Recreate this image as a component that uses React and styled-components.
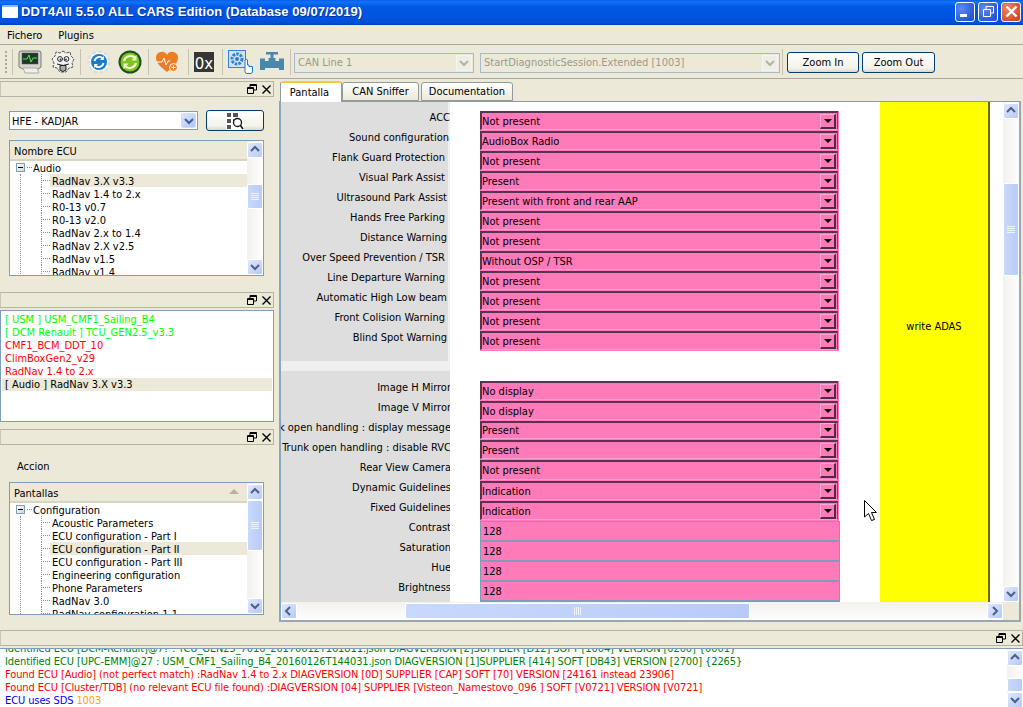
import React from 'react';
import styled, { createGlobalStyle } from 'styled-components';

const Global = createGlobalStyle`
    html, body {
        margin: 0;
        padding: 0;
        background: #ece9d8;
    }
    * {
        box-sizing: border-box;
    }
`;

const Window = styled.div`
    width: 1023px;
    height: 707px;
    overflow: hidden;
    display: flex;
    flex-direction: column;
    position: relative;
    background: #ece9d8;
    color: #000;
    font-family: "DejaVu Sans Condensed", "DejaVu Sans", sans-serif;
    font-size: 11px;
    line-height: 13px;
`;

const TitleBar = styled.div`
    height: 25px;
    flex: none;
    display: flex;
    align-items: center;
    padding: 0 2px 2px 2px;
    background: linear-gradient(180deg, #0a5ae8 0%, #0f74fb 8%, #0258e2 25%, #0053e0 75%, #0050d8 90%, #0041b5 100%);
`;
const AppIcon = styled.div`
    width: 16px;
    height: 13px;
    margin: 0 3px 0 0;
    background: #fff;
    border-top: 2px solid #9fb4d8;
    border-radius: 1px;
`;
const TitleText = styled.div`
    flex: 1;
    color: #fff;
    font-family: "Liberation Sans", sans-serif;
    font-weight: bold;
    font-size: 13px;
    letter-spacing: 0.06px;
    white-space: nowrap;
    text-shadow: 1px 1px #0f2f9a;
`;
const WinButton = styled.div`
    width: 20px;
    height: 20px;
    margin-left: 3px;
    display: flex;
    align-items: center;
    justify-content: center;
    border: 1px solid #fff;
    border-radius: 3px;
    background: ${p => (p.$red
        ? 'radial-gradient(circle at 30% 30%, #e8866a, #d5482b 80%)'
        : 'radial-gradient(circle at 30% 30%, #5c8cf0, #2453d6 80%)')};
`;

const MenuBar = styled.div`
    height: 20px;
    flex: none;
    display: flex;
    align-items: center;
    padding: 1px 0 0 7px;
    gap: 16px;
    border-bottom: 1px solid #aca899;
`;

const ToolBar = styled.div`
    height: 34px;
    flex: none;
    display: flex;
    align-items: center;
    border-bottom: 1px solid #aca899;
    padding-left: 5px;
`;
const Grip = styled.div`
    width: 2px;
    height: 22px;
    margin-right: 4px;
    background: repeating-linear-gradient(180deg, #aca899 0 2px, transparent 2px 4px);
`;
const Sep = styled.div`
    width: 1px;
    height: 26px;
    background: #c5c2b0;
    flex: none;
    margin: 0 ${p => p.$right || 5}px 0 ${p => p.$left || 5}px;
`;
const ToolIcon = styled.svg`
    flex: none;
    width: ${p => p.$w || 24}px;
    height: 24px;
    margin-right: ${p => p.$gap || 0}px;
`;
const ZeroBox = styled.div`
    width: 20px;
    height: 20px;
    flex: none;
    background: #353535;
    color: #fff;
    font-family: "DejaVu Sans", sans-serif;
    font-size: 15px;
    line-height: 15px;
    display: flex;
    align-items: flex-end;
    justify-content: center;
`;
const DisabledCombo = styled.div`
    flex: none;
    width: ${p => p.$w}px;
    height: 20px;
    margin: 2px ${p => p.$gap || 0}px 0 0;
    border: 1px solid #a9b9cc;
    color: #9a9a8c;
    padding: 2px 0 0 3px;
    display: flex;
    justify-content: space-between;
    white-space: nowrap;
`;
const DisabledArrow = styled.div`
    width: 16px;
    height: 16px;
    margin-top: -1px;
    margin-right: 1px;
    background: #eeeee4;
    border: 1px solid #f6f6f0;
    display: flex;
    align-items: center;
    justify-content: center;
`;
const PushButton = styled.div`
    flex: none;
    width: ${p => p.$w}px;
    height: 21px;
    margin: 2px ${p => p.$gap || 0}px 0 0;
    border: 1px solid #003c74;
    border-radius: 3px;
    background: linear-gradient(180deg, #fff 0%, #f3f2ea 80%, #dcd8c8 100%);
    display: flex;
    align-items: center;
    justify-content: center;
`;

const Main = styled.div`
    flex: 1;
    min-height: 0;
    display: flex;
`;
const LeftColumn = styled.div`
    width: 274px;
    flex: none;
    margin-right: 5px;
    padding-top: 2px;
    display: flex;
    flex-direction: column;
`;
const DockTitle = styled.div`
    height: 16px;
    flex: none;
    border: 1px solid #b5b29f;
    border-left-color: #c9c6b4;
    display: flex;
    align-items: center;
    justify-content: flex-end;
    gap: 5px;
    padding-right: 2px;
    background: #ece9d8;
`;
const DockBody = styled.div`
    height: ${p => p.$h}px;
    flex: none;
    padding: ${p => p.$pad || '0'};
`;

const ModelRow = styled.div`
    display: flex;
    align-items: center;
    gap: 8px;
    height: 21px;
    padding: 0 10px 0 9px;
    margin-bottom: 9px;
`;
const ModelCombo = styled.div`
    width: 189px;
    height: 19px;
    background: #fff;
    border: 1px solid #7f9db9;
    display: flex;
    justify-content: space-between;
    align-items: center;
    padding: 1px 1px 0 2px;
`;
const BlueArrow = styled.div`
    width: 15px;
    height: 15px;
    margin-top: -1px;
    border-radius: 2px;
    background: linear-gradient(135deg, #dbe5fd, #b0c5f5);
    border: 1px solid #d0dcf8;
    display: flex;
    align-items: center;
    justify-content: center;
`;
const SearchButton = styled(PushButton)`
    width: 58px;
    margin: 0;
`;

const TreeBox = styled.div`
    margin: 0 10px 0 9px;
    height: ${p => p.$h}px;
    border: 1px solid #7f9db9;
    background: #fff;
    display: flex;
    overflow: hidden;
`;
const TreeMain = styled.div`
    flex: 1;
    min-width: 0;
    display: flex;
    flex-direction: column;
`;
const TreeHeader = styled.div`
    height: 20px;
    flex: none;
    background: #ece9d8;
    border-bottom: 2px solid #d8d4c2;
    padding: 4px 0 0 4px;
    display: flex;
    justify-content: space-between;
`;
const SortMark = styled.div`
    width: 0;
    height: 0;
    margin: 2px 8px 0 0;
    border-left: 5px solid transparent;
    border-right: 5px solid transparent;
    border-bottom: 5px solid #b5b2a2;
`;
const TreeRows = styled.div`
    flex: 1;
    min-height: 0;
    overflow: hidden;
`;
const TreeRoot = styled.div`
    height: 13px;
    display: flex;
    align-items: center;
    padding-left: 6px;
`;
const RootLabel = styled.span`
    position: relative;
    top: 1px;
`;
const Expander = styled.div`
    width: 9px;
    height: 9px;
    flex: none;
    border: 1px solid #7f9db9;
    background: linear-gradient(135deg, #fff, #d8d4c6);
    display: flex;
    align-items: center;
    justify-content: center;
    margin-right: 2px;
    &::after {
        content: "";
        width: 5px;
        height: 1px;
        background: #000;
    }
`;
const RootDots = styled.div`
    width: 5px;
    border-top: 1px dotted #8f8d80;
    margin-right: 1px;
`;
const TreeChildren = styled.div`
    margin-left: 10px;
    border-left: 1px dotted #8f8d80;
`;
const TreeLeaf = styled.div`
    height: 13px;
    display: flex;
    align-items: center;
    padding-left: 20px;
    position: relative;
    white-space: nowrap;
    background: linear-gradient(90deg, #fff 0 29px, ${p => (p.$sel ? '#ece9d8' : '#fff')} 29px);
    &::before {
        content: "";
        width: 9px;
        margin-right: 2px;
        border-top: 1px dotted #8f8d80;
    }
`;
const LeafText = styled.span`
    position: relative;
    top: 1px;
`;
const LeafLine = styled.div`
    position: absolute;
    left: 20px;
    top: 0;
    bottom: 0;
    border-left: 1px dotted #8f8d80;
`;

const EcuList = styled.div`
    height: 112px;
    background: #fff;
    border: 1px solid #7f9db9;
    margin-top: 2px;
    padding: 2px 1px;
`;
const EcuRow = styled.div`
    height: 13px;
    padding-left: 3px;
    white-space: nowrap;
    color: ${p => p.$color || '#000'};
    background: ${p => (p.$sel ? '#ece9d8' : 'transparent')};
`;
const ActionLabel = styled.div`
    padding: 15px 0 0 17px;
    height: 37px;
`;

const TabArea = styled.div`
    flex: 1;
    min-width: 0;
    display: flex;
    flex-direction: column;
    padding: 1px 2px 0 0;
    height: 543px;
`;
const TabRow = styled.div`
    height: 21px;
    flex: none;
    display: flex;
    align-items: flex-end;
    padding-left: 1px;
`;
const Tab = styled.div`
    height: ${p => (p.$active ? 21 : 19)}px;
    width: ${p => p.$w}px;
    margin-right: ${p => p.$gap || 0}px;
    padding-right: ${p => (p.$active ? 3 : 0)}px;
    display: flex;
    align-items: center;
    justify-content: center;
    background: ${p => (p.$active ? '#fff' : 'linear-gradient(180deg, #fff, #ece9d8)')};
    border: 1px solid #919b9c;
    border-bottom: ${p => (p.$active ? 'none' : '1px solid #919b9c')};
    border-top: ${p => (p.$active ? '2px solid #ffc73c' : '1px solid #919b9c')};
    border-radius: 3px 3px 0 0;
    position: relative;
    margin-bottom: ${p => (p.$active ? '-1px' : '0')};
    z-index: ${p => (p.$active ? 1 : 0)};
`;
const TabPane = styled.div`
    flex: 1;
    min-height: 0;
    display: grid;
    grid-template-columns: 1fr 16px;
    grid-template-rows: 1fr 18px;
    border: 1px solid #919b9c;
    border-left: 2px solid #86a6c4;
    border-right: 2px solid #9aa6b0;
    border-bottom: 2px solid #9aa6b0;
    background: #fff;
`;
const Form = styled.div`
    overflow: hidden;
    display: flex;
    min-height: 0;
    min-width: 0;
`;
const LabelColumn = styled.div`
    width: 169px;
    flex: none;
    display: flex;
    flex-direction: column;
    background: #eeeeee;
`;
const LabelGroup = styled.div`
    height: ${p => p.$h}px;
    flex: none;
    background: ${p => (p.$solid ? '#dedede' : 'linear-gradient(90deg, #dedede 167px, #eeeeee 167px)')};
    padding-top: ${p => p.$top}px;
    margin-top: ${p => p.$gap || 0}px;
    overflow: hidden;
`;
const FieldLabel = styled.div`
    height: 20px;
    line-height: 13px;
    white-space: nowrap;
    display: flex;
    justify-content: flex-end;
    padding-right: ${p => p.$inset || 0}px;
    margin-right: ${p => -(p.$bleed || 0)}px;
`;
const FieldColumn = styled.div`
    width: 430px;
    flex: none;
    padding: 9px 0 0 30px;
    background: #fff;
    overflow: hidden;
`;
const FieldGap = styled.div`
    height: 30px;
`;
const Combo = styled.div`
    width: 359px;
    height: ${p => p.$h || 20}px;
    background: #ff7ab8;
    padding: 0 1px 1px 0;
    display: flex;
`;
const ComboInner = styled.div`
    flex: 1;
    display: flex;
    align-items: center;
    justify-content: space-between;
    border-top: 2px solid #5b3350;
    border-left: 2px solid #5b3350;
    border-right: 1px solid #8a3f69;
    border-bottom: 1px solid #ffa0d0;
    padding: 0 1px 0 0;
    white-space: nowrap;
`;
const ComboButton = styled.div`
    width: 16px;
    height: 15px;
    background: #ff7ab8;
    border-top: 1px solid #ffa8d2;
    border-left: 1px solid #ffa8d2;
    border-right: 2px solid #4e2c44;
    border-bottom: 2px solid #4e2c44;
    display: flex;
    align-items: center;
    justify-content: center;
    &::after {
        content: "";
        width: 0;
        height: 0;
        border-left: 4px solid transparent;
        border-right: 4px solid transparent;
        border-top: 4px solid #000;
    }
`;
const LineEdit = styled.div`
    width: 360px;
    height: 20px;
    background: #ff7ab8;
    border: 1px solid #7f9db9;
    padding: 3px 0 0 2px;
`;
const WriteColumn = styled.div`
    width: 110px;
    flex: none;
    background: #ffff00;
    border-right: 2px solid #6b6b00;
    display: flex;
    align-items: center;
    justify-content: center;
    padding-bottom: 52px;
`;
const FormRest = styled.div`
    flex: 1;
    background: #fff;
`;
const Pointer = styled.svg`
    position: absolute;
    left: 864px;
    top: 500px;
    width: 14px;
    height: 22px;
`;

const VBar = styled.div`
    display: flex;
    flex-direction: column;
    flex: none;
    width: ${p => p.$w || 16}px;
    padding-top: 1px;
    background: linear-gradient(90deg, #f3f1ec, #fefefe);
`;
const HBar = styled.div`
    display: flex;
    height: 18px;
    padding: 1px 0;
    background: linear-gradient(180deg, #f3f1ec, #fefefe);
`;
const ArrowButton = styled.div`
    flex: none;
    width: ${p => p.$w || 16}px;
    height: 16px;
    border: 1px solid #fff;
    border-radius: 2px;
    background: linear-gradient(135deg, #dfe8fe, #b6c9f6);
    display: flex;
    align-items: center;
    justify-content: center;
`;
const Thumb = styled.div`
    flex: none;
    border: 1px solid #fff;
    border-radius: 2px;
    background: linear-gradient(90deg, #c9d8fc, #b8cbf8);
    display: flex;
    align-items: center;
    justify-content: center;
    height: ${p => (p.$horizontal ? '100%' : `${p.$size}px`)};
    width: ${p => (p.$horizontal ? `${p.$size}px` : '100%')};
    margin: ${p => (p.$horizontal ? `0 0 0 ${p.$offset}px` : `${p.$offset}px 0 0 0`)};
`;
const Spacer = styled.div`
    flex: 1;
`;
const Corner = styled.div`
    background: #ece9d8;
`;

const BottomDock = styled.div`
    flex: none;
    display: flex;
    flex-direction: column;
`;
const LogRow = styled.div`
    height: 59px;
    margin-top: 2px;
    display: flex;
    background: #fff;
    border-top: 1px solid #7f9db9;
`;
const LogText = styled.div`
    flex: 1;
    min-width: 0;
    overflow: hidden;
    padding-left: 5px;
    letter-spacing: -0.1px;
`;
const LogLine = styled.div`
    height: 13px;
    white-space: nowrap;
    color: ${p => p.$color};
    margin-top: ${p => p.$top || 0}px;
`;
const Orange = styled.span`
    color: #ffa500;
`;

const Chevron = ({ dir = 'up', color = '#4d6185' }) => {
    const pts = {
        up: '1,6 5,2 9,6',
        down: '1,3 5,7 9,3',
        left: '6,1 2,5 6,9',
        right: '3,1 7,5 3,9',
    }[dir];
    return (
        <svg width="10" height="10" viewBox="0 0 10 10">
            <polyline points={pts} fill="none" stroke={color} strokeWidth="2" />
        </svg>
    );
};

const Grippy = ({ horizontal }) => (
    <svg width="8" height="8" viewBox="0 0 8 8">
        {[1, 3, 5, 7].map(v => (horizontal
            ? <line key={v} x1={v - 0.5} y1="0" x2={v - 0.5} y2="8" stroke="#eef3fe" />
            : <line key={v} x1="0" y1={v - 0.5} x2="8" y2={v - 0.5} stroke="#eef3fe" />))}
    </svg>
);

const VScroll = ({ offset, size, w }) => (
    <VBar $w={w}>
        <ArrowButton $w={w}><Chevron dir="up" /></ArrowButton>
        <Thumb $offset={offset} $size={size}>{size > 20 && <Grippy />}</Thumb>
        <Spacer />
        <ArrowButton $w={w}><Chevron dir="down" /></ArrowButton>
    </VBar>
);

const DockIcons = () => (
    <>
        <svg width="10" height="10" viewBox="0 0 10 10">
            <path d="M3 3V0.5H9.5V6H7M0.5 3.5H6.5V9.5H0.5ZM0.5 4.5H6.5M3 1.5H9.5" fill="none" stroke="#000" />
        </svg>
        <svg width="9" height="9" viewBox="0 0 9 9">
            <path d="M0.5 0.5L8.5 8.5M8.5 0.5L0.5 8.5" fill="none" stroke="#000" strokeWidth="1.4" />
        </svg>
    </>
);

const ecus = ['RadNav 3.X v3.3', 'RadNav 1.4 to 2.x', 'R0-13 v0.7', 'R0-13 v2.0', 'RadNav 2.x to 1.4', 'RadNav 2.X v2.5', 'RadNav v1.5', 'RadNav v1.4'];
const screens = ['Acoustic Parameters', 'ECU configuration - Part I', 'ECU configuration - Part II', 'ECU configuration - Part III', 'Engineering configuration', 'Phone Parameters', 'RadNav 3.0', 'RadNav configuration 1.1'];

const Tree = ({ height, title, root, items, selected, sorted, thumb }) => (
    <TreeBox $h={height}>
        <TreeMain>
            <TreeHeader>
                {title}
                {sorted && <SortMark />}
            </TreeHeader>
            <TreeRows>
                <TreeRoot><Expander /><RootDots /><RootLabel>{root}</RootLabel></TreeRoot>
                <TreeChildren>
                    {items.map(item => (
                        <TreeLeaf key={item} $sel={item === selected}>
                            <LeafLine />
                            <LeafText>{item}</LeafText>
                        </TreeLeaf>
                    ))}
                </TreeChildren>
            </TreeRows>
        </TreeMain>
        <VScroll offset={thumb.offset} size={thumb.size} />
    </TreeBox>
);

const firstGroup = [
    ['ACC', 'Not present', 0],
    ['Sound configuration', 'AudioBox Radio', 1],
    ['Flank Guard Protection', 'Not present', 5],
    ['Visual Park Assist', 'Present', 5],
    ['Ultrasound Park Assist', 'Present with front and rear AAP', 3],
    ['Hands Free Parking', 'Not present', 5],
    ['Distance Warning', 'Not present', 3],
    ['Over Speed Prevention / TSR', 'Without OSP / TSR', 5],
    ['Line Departure Warning', 'Not present', 5],
    ['Automatic High Low beam', 'Not present', 3],
    ['Front Colision Warning', 'Not present', 5],
    ['Blind Spot Warning', 'Not present', 3],
];

const secondGroup = [
    ['Image H Mirror', 'No display', 20],
    ['Image V Mirror', 'No display', 20],
    ['Trunk open handling : display message', 'Present', 19],
    ['Trunk open handling : disable RVC', 'Present', 20],
    ['Rear View Camera', 'Not present', 21],
    ['Dynamic Guidelines', 'Indication', 20],
    ['Fixed Guidelines', 'Indication', 20],
];

const numbers = ['Contrast', 'Saturation', 'Hue', 'Brightness', 'Sharpness'];

const FieldCombo = ({ value, h }) => (
    <Combo $h={h}>
        <ComboInner>
            {value}
            <ComboButton />
        </ComboInner>
    </Combo>
);

const App = () => (
    <Window>
        <Global />
        <TitleBar>
            <AppIcon />
            <TitleText>DDT4All 5.5.0 ALL CARS Edition (Database 09/07/2019)</TitleText>
            <WinButton>
                <svg width="12" height="12" viewBox="0 0 12 12"><rect x="1" y="8" width="7" height="3" fill="#fff" /></svg>
            </WinButton>
            <WinButton>
                <svg width="13" height="13" viewBox="0 0 13 13">
                    <path d="M4 4V1.5H11.5V8H9M1.5 4.5H8.5V11.5H1.5Z" fill="none" stroke="#fff" />
                </svg>
            </WinButton>
            <WinButton $red>
                <svg width="13" height="13" viewBox="0 0 13 13">
                    <path d="M1.5 1.5L11.5 11.5M11.5 1.5L1.5 11.5" stroke="#fff" strokeWidth="2.4" />
                </svg>
            </WinButton>
        </TitleBar>

        <MenuBar>
            <span>Fichero</span>
            <span>Plugins</span>
        </MenuBar>

        <ToolBar>
            <Grip />
            <Sep $left={1} $right={5} />
            <ToolIcon viewBox="0 0 24 24" $gap={9}>
                <path d="M3 1H21Q23 1 23 3V17L20 19H5L1 17V3Q1 1 3 1Z" fill="#d6d6cf" stroke="#777" />
                <rect x="4" y="3" width="16" height="11" fill="#1f3a24" stroke="#555" strokeWidth="0.5" />
                <polyline points="5,9 9,9 11,5 13,12 15,8 19,8" fill="none" stroke="#5fe05f" />
                <path d="M5 18H19L21 23H7Z" fill="#f0f0e8" stroke="#aaa" />
            </ToolIcon>
            <ToolIcon viewBox="0 0 24 24">
                <path d="M12 1L15 3L19 2L20 6L23 9L21 13L22 17L18 18L15 22H9L6 18L2 17L3 13L1 9L4 6L5 2L9 3Z" fill="#f2f2ee" stroke="#555" strokeDasharray="3 1" />
                <circle cx="9" cy="9" r="2.4" fill="#fff" stroke="#222" />
                <circle cx="15.5" cy="9" r="2.4" fill="#fff" stroke="#222" />
                <circle cx="9.5" cy="9.5" r="0.9" fill="#222" />
                <circle cx="15" cy="9.5" r="0.9" fill="#222" />
                <path d="M6 14Q12 17 18 14" fill="none" stroke="#222" />
                <path d="M9 15.5H15V20Q12 23 9 20Z" fill="#aaa" stroke="#222" />
            </ToolIcon>
            <Sep $left={5} $right={6} />
            <ToolIcon viewBox="0 0 24 24" $gap={7}>
                <circle cx="12" cy="12" r="10.5" fill="#f4f4f0" stroke="#dcdcd6" strokeWidth="2" strokeDasharray="4 2" />
                <circle cx="12" cy="12" r="8" fill="#1a7bc9" />
                <path d="M7.5 11A5 5 0 0 1 16 8.5M16.5 13A5 5 0 0 1 8 15.5" fill="none" stroke="#fff" strokeWidth="1.8" />
                <path d="M16.8 6V10H13ZM7.2 18V14H11Z" fill="#fff" />
            </ToolIcon>
            <ToolIcon viewBox="0 0 24 24">
                <circle cx="12" cy="12" r="11.5" fill="#1e4d1e" />
                <circle cx="12" cy="12" r="9.5" fill="#7cc520" />
                <path d="M6 11A6.5 6.5 0 0 1 17 8M18 13A6.5 6.5 0 0 1 7 16" fill="none" stroke="#f4f8d0" strokeWidth="2.2" />
                <path d="M18.5 5V10.5H13.5ZM5.5 19V13.5H10.5Z" fill="#f4f8d0" />
            </ToolIcon>
            <Sep $left={6} $right={6} />
            <ToolIcon viewBox="0 0 24 24">
                <path d="M12 22C4 16 1 12 1 7.5A5.8 5.8 0 0 1 12 5A5.8 5.8 0 0 1 23 7.5C23 12 20 16 12 22Z" fill="#ee7d22" />
                <polyline points="1,12 7,12 9,8 11,15 13,11 15,11" fill="none" stroke="#fff" />
                <circle cx="18.5" cy="17.5" r="4" fill="#ee7d22" stroke="#fff" />
                <path d="M16.5 17.5H20.5M18.5 15.5V19.5" stroke="#fff" />
            </ToolIcon>
            <Sep $left={9} $right={5} />
            <ZeroBox>0x</ZeroBox>
            <Sep $left={8} $right={5} />
            <ToolIcon viewBox="0 0 25 24" $w={25} $gap={7}>
                <rect x="0.5" y="0.5" width="17" height="17" fill="#cfe2f7" stroke="#2f86d6" />
                <circle cx="9" cy="9" r="5" fill="none" stroke="#2f7fc9" strokeWidth="3" strokeDasharray="2.5 1.2" />
                <circle cx="9" cy="9" r="2" fill="#2f7fc9" />
                <path d="M17 13V21.5Q17 23.5 19 23.5H23Q24.5 23.5 24.5 21V16.5H21V15H19.5V10Q18 8.5 17 10Z" fill="#fff" stroke="#1c78c8" />
            </ToolIcon>
            <ToolIcon viewBox="0 0 24 24">
                <path d="M6 2H18V4.5H13.5V8H15.5V11H19V8.5H24V20H19V18H5V20H0V8.5H5V11H8.5V8H10.5V4.5H6Z" fill="#4a87ad" />
            </ToolIcon>
            <Sep $left={6} $right={3} />
            <DisabledCombo $w={180} $gap={6}>
                CAN Line 1
                <DisabledArrow><Chevron dir="down" color="#b3b3a6" /></DisabledArrow>
            </DisabledCombo>
            <DisabledCombo $w={300}>
                StartDiagnosticSession.Extended [1003]
                <DisabledArrow><Chevron dir="down" color="#b3b3a6" /></DisabledArrow>
            </DisabledCombo>
            <Sep $left={2} $right={4} />
            <PushButton $w={72} $gap={3}>Zoom In</PushButton>
            <PushButton $w={73}>Zoom Out</PushButton>
        </ToolBar>

        <Main>
            <LeftColumn>
                <DockTitle><DockIcons /></DockTitle>
                <DockBody $h={195} $pad="13px 0 0 0">
                    <ModelRow>
                        <ModelCombo>
                            HFE - KADJAR
                            <BlueArrow><Chevron dir="down" color="#3d5f9f" /></BlueArrow>
                        </ModelCombo>
                        <SearchButton>
                            <svg width="18" height="18" viewBox="0 0 18 18">
                                <rect width="18" height="18" fill="#fff" />
                                <path d="M1 1H5V5H1ZM7 1H12V5H7ZM1 7H5V11H1ZM1 13H5V17H1ZM7 7H9V9H7Z" fill="#555" />
                                <circle cx="11.5" cy="10.5" r="4" fill="#fff" stroke="#111" strokeWidth="1.3" />
                                <path d="M14.5 13.5L17 17" stroke="#111" strokeWidth="1.6" />
                            </svg>
                        </SearchButton>
                    </ModelRow>
                    <Tree
                        height={136}
                        title="Nombre ECU"
                        root="Audio"
                        items={ecus}
                        selected="RadNav 3.X v3.3"
                        thumb={{ offset: 26, size: 25 }}
                    />
                </DockBody>
                <DockTitle><DockIcons /></DockTitle>
                <EcuList>
                    <EcuRow $color="#00ff00">[ USM ] USM_CMF1_Sailing_B4</EcuRow>
                    <EcuRow $color="#00ff00">[ DCM Renault ] TCU_GEN2.5_v3.3</EcuRow>
                    <EcuRow $color="#ff0000">CMF1_BCM_DDT_10</EcuRow>
                    <EcuRow $color="#ff0000">ClimBoxGen2_v29</EcuRow>
                    <EcuRow $color="#ff0000">RadNav 1.4 to 2.x</EcuRow>
                    <EcuRow $sel>[ Audio ] RadNav 3.X v3.3</EcuRow>
                </EcuList>
                <DockBody $h={7} />
                <DockTitle><DockIcons /></DockTitle>
                <ActionLabel>Accion</ActionLabel>
                <Tree
                    height={133}
                    title="Pantallas"
                    root="Configuration"
                    items={screens}
                    selected="ECU configuration - Part II"
                    sorted
                    thumb={{ offset: 0, size: 51 }}
                />
            </LeftColumn>

            <TabArea>
                <TabRow>
                    <Tab $active $w={62}>Pantalla</Tab>
                    <Tab $w={77} $gap={2}>CAN Sniffer</Tab>
                    <Tab $w={92}>Documentation</Tab>
                </TabRow>
                <TabPane>
                    <Form>
                        <LabelColumn>
                            <LabelGroup $h={259} $top={9}>
                                {firstGroup.map(([label, , inset]) => (
                                    <FieldLabel key={label} $inset={inset}>{label}</FieldLabel>
                                ))}
                            </LabelGroup>
                            <LabelGroup $solid $h={231} $top={10} $gap={10}>
                                {secondGroup.map(([label]) => <FieldLabel key={label} $bleed={1}>{label}</FieldLabel>)}
                                {numbers.map(label => <FieldLabel key={label} $bleed={1}>{label}</FieldLabel>)}
                            </LabelGroup>
                        </LabelColumn>
                        <FieldColumn>
                            {firstGroup.map(([label, value]) => <FieldCombo key={label} value={value} />)}
                            <FieldGap />
                            {secondGroup.map(([label, value, h]) => <FieldCombo key={label} value={value} h={h} />)}
                            {numbers.map(label => <LineEdit key={label}>128</LineEdit>)}
                        </FieldColumn>
                        <WriteColumn>write ADAS</WriteColumn>
                        <FormRest />
                    </Form>
                    <VScroll offset={64} size={93} />
                    <HBar>
                        <ArrowButton><Chevron dir="left" /></ArrowButton>
                        <Thumb $horizontal $offset={108} $size={345}><Grippy horizontal /></Thumb>
                        <Spacer />
                        <ArrowButton><Chevron dir="right" /></ArrowButton>
                    </HBar>
                    <Corner />
                </TabPane>
            </TabArea>
        </Main>

        <BottomDock>
            <DockTitle><DockIcons /></DockTitle>
            <LogRow>
                <LogText>
                    <LogLine $color="#008000" $top={-7}>Identified ECU [DCM-Renault]@7? : TCU_GEN25_7010_20170612T161811.json DIAGVERSION [2]SUPPLIER [D12] SOFT [1004] VERSION [0200] {'{0001}'}</LogLine>
                    <LogLine $color="#008000">Identified ECU [UPC-EMM]@27 : USM_CMF1_Sailing_B4_20160126T144031.json DIAGVERSION [1]SUPPLIER [414] SOFT [DB43] VERSION [2700] {'{2265}'}</LogLine>
                    <LogLine $color="#ff0000">Found ECU [Audio] (not perfect match) :RadNav 1.4 to 2.x DIAGVERSION [0D] SUPPLIER [CAP] SOFT [70] VERSION [24161 instead 23906]</LogLine>
                    <LogLine $color="#ff0000">Found ECU [Cluster/TDB] (no relevant ECU file found) :DIAGVERSION [04] SUPPLIER [Visteon_Namestovo_096 ] SOFT [V0721] VERSION [V0721]</LogLine>
                    <LogLine $color="#0000ff">ECU uses SDS <Orange>1003</Orange></LogLine>
                </LogText>
                <VScroll offset={12} size={14} />
            </LogRow>
        </BottomDock>

        <Pointer viewBox="0 0 14 22">
            <path d="M0.5 0.5V17L4.5 13.5L7.5 20.5L10.5 19.5L7.5 12.5H12.5Z" fill="#fff" stroke="#000" />
        </Pointer>
    </Window>
);

export default App;
